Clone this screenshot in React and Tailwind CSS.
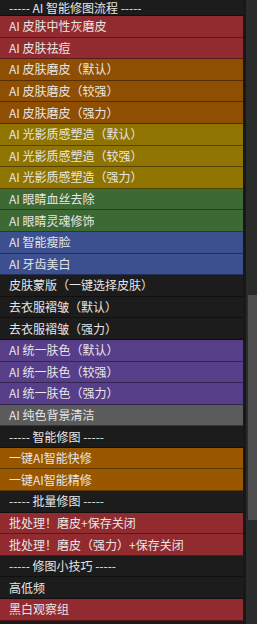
import React from 'react';

const COLORS = {
    red: 'bg-[#922b2f]',
    orange: 'bg-[#8e4f03]',
    olive: 'bg-[#8f7401]',
    green: 'bg-[#3d6934]',
    blue: 'bg-[#3c4f8f]',
    dark: 'bg-[#1c1c1c]',
    purple: 'bg-[#573e89]',
    gray: 'bg-[#5b5b5b]',
    amber: 'bg-[#995800]',
};

const rows = [
    ['red', 'AI 皮肤中性灰磨皮'],
    ['red', 'AI 皮肤祛痘'],
    ['orange', 'AI 皮肤磨皮（默认）'],
    ['orange', 'AI 皮肤磨皮（较强）'],
    ['orange', 'AI 皮肤磨皮（强力）'],
    ['olive', 'AI 光影质感塑造（默认）'],
    ['olive', 'AI 光影质感塑造（较强）'],
    ['olive', 'AI 光影质感塑造（强力）'],
    ['green', 'AI 眼睛血丝去除'],
    ['green', 'AI 眼睛灵魂修饰'],
    ['blue', 'AI 智能瘦脸'],
    ['blue', 'AI 牙齿美白'],
    ['dark', '皮肤蒙版（一键选择皮肤）'],
    ['dark', '去衣服褶皱（默认）'],
    ['dark', '去衣服褶皱（强力）'],
    ['purple', 'AI 统一肤色（默认）'],
    ['purple', 'AI 统一肤色（较强）'],
    ['purple', 'AI 统一肤色（强力）'],
    ['gray', 'AI 纯色背景清洁'],
    ['dark', '-----  智能修图 -----'],
    ['amber', '一键AI智能快修'],
    ['amber', '一键AI智能精修'],
    ['dark', '-----  批量修图 -----'],
    ['red', '批处理！磨皮+保存关闭'],
    ['red', '批处理！磨皮（强力）+保存关闭'],
    ['dark', '----- 修图小技巧 -----'],
    ['dark', '高低频'],
    ['red', '黑白观察组'],
];

const App = () => {
    return (
        <div
            className="w-[257px] h-[624px] overflow-hidden bg-[#1b1b1b] flex"
            style={{ fontFamily: '"Noto Sans CJK SC", "Liberation Sans", sans-serif' }}
        >
            <div className="w-[243px] flex flex-col">
                <div className="bg-[#1c1c1c] h-[16px] shrink-0 flex items-center pl-[9px] text-[12px] leading-none text-[#e6e6e6] border-b border-black/40 whitespace-nowrap">
                    ----- AI 智能修图流程 -----
                </div>
                {rows.map(([color, label], i) => (
                    <div
                        key={i}
                        className={`${COLORS[color]} h-[21.6px] shrink-0 flex items-center pl-[9px] text-[12px] leading-none text-[#e6e6e6] border-b border-black/40 whitespace-nowrap`}
                    >
                        {label}
                    </div>
                ))}
            </div>
            <div className="w-[3px] bg-[#181818]" />
            <div className="flex-1 bg-[#2a2c2c] flex justify-end">
                <div className="w-[9px] h-[225px] mt-[295px] bg-[#4e4e4e]" />
            </div>
        </div>
    );
};

export default App;
